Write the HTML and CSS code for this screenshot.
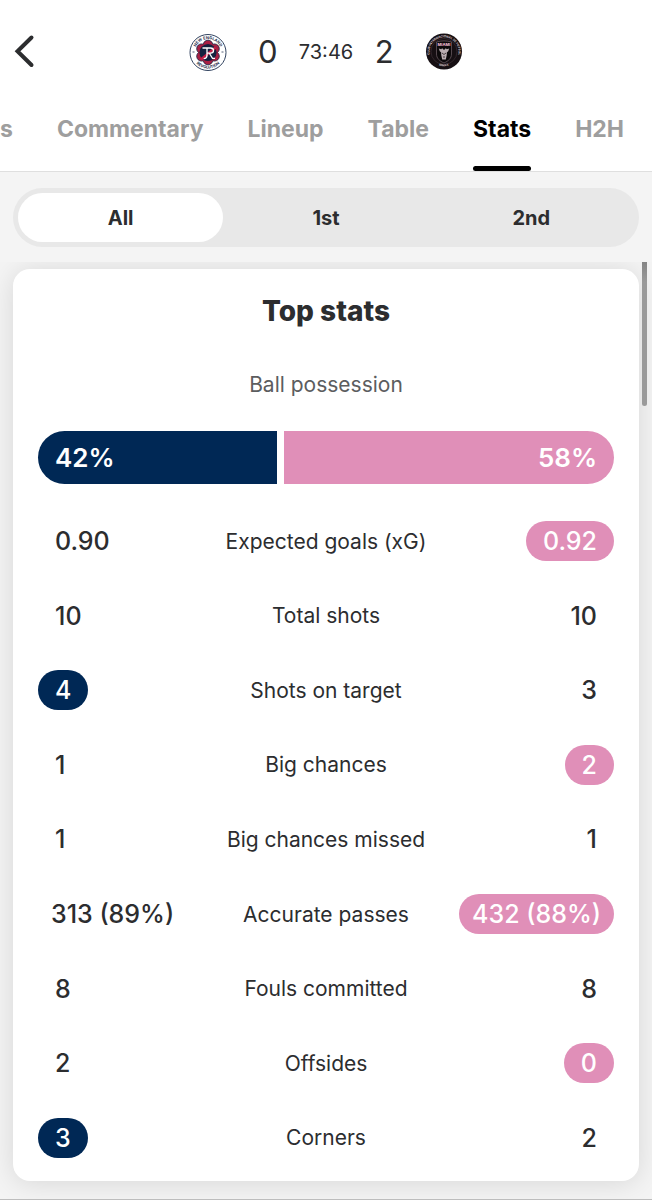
FILE: index.html
```html
<!DOCTYPE html>
<html lang="en">
<head>
<meta charset="utf-8">
<meta name="viewport" content="width=device-width, initial-scale=1">
<title>Match stats</title>
<link rel="stylesheet" href="styles.css">
</head>
<body>
<header class="header">
  <div class="match">
    <button class="back" type="button" aria-label="Back">
      <svg width="24" height="36" viewBox="0 0 24 36" fill="none" stroke="#2c2d2f" stroke-width="4" stroke-linecap="round" stroke-linejoin="miter"><path d="M18.500 3.500 4.500 17.300 18.500 31"/></svg>
    </button>
    <div class="scoreboard">
      <svg class="crest" viewBox="0 0 38 38" role="img" aria-label="New England Revolution">
        <defs>
          <path id="ne-top" d="M5.600 19.500a13.400 13.400 0 0 1 26.800 0"/>
          <path id="ne-bottom" d="M3 19.500a16 16 0 0 0 32 0"/>
        </defs>
        <circle cx="19" cy="19.500" r="18" fill="#fff" stroke="#1b2e4e" stroke-width="0.900"/>
        <g class="crest-text" fill="#1d2b49">
          <text text-anchor="middle"><textPath href="#ne-top" startOffset="50%">NEW ENGLAND</textPath></text>
          <text text-anchor="middle"><textPath href="#ne-bottom" startOffset="50%">REVOLUTION</textPath></text>
        </g>
        <path d="M3.500 19h2M32.500 19h2" stroke="#56617a"/>
        <g fill="#a91f43" stroke="#14213f" stroke-width="0.800">
          <circle cx="19" cy="12" r="4.800"/><circle cx="25.500" cy="15.700" r="4.800"/><circle cx="25.500" cy="23.300" r="4.800"/>
          <circle cx="19" cy="27" r="4.800"/><circle cx="12.500" cy="23.300" r="4.800"/><circle cx="12.500" cy="15.700" r="4.800"/>
        </g>
        <circle cx="19" cy="19.500" r="9.600" fill="#a91f43"/>
        <circle cx="19" cy="19.500" r="8.600" fill="#14213f"/>
        <path d="M12 26.500 26.500 14.500" stroke="#c42048" stroke-width="2.600"/>
        <path d="M13.500 15h8c4 0 4 5.200 0 5.200h-3M18 15v7c0 2.500-1.600 3.700-3.300 3.700M20.500 20.500l3 4.800h2.500" fill="none" stroke="#fff" stroke-width="1.300"/>
      </svg>
      <span class="goals">0</span>
      <span class="clock">73:46</span>
      <span class="goals">2</span>
      <svg class="crest" viewBox="0 0 38 38" role="img" aria-label="Inter Miami">
        <defs>
          <path id="mi-top" d="M7.800 28.300a14.600 14.600 0 1 1 22.400 0"/>
          <path id="mi-bottom" d="M8 29a16.300 16.300 0 0 0 22 0"/>
        </defs>
        <circle cx="19" cy="18.500" r="18" fill="#160f13"/>
        <g class="crest-text" fill="#d9c9cf">
          <text class="crest-ring" text-anchor="middle"><textPath href="#mi-top" startOffset="50%">CLUB INTERNACIONAL DE FUTBOL</textPath></text>
          <text class="crest-ring" text-anchor="middle"><textPath href="#mi-bottom" startOffset="50%">MMXX</textPath></text>
        </g>
        <circle cx="19" cy="18.500" r="13" fill="none" stroke="#4a3c42" stroke-width="0.500"/>
        <path d="M11.500 9c5-1.500 10-1.500 15 0v12c0 4.500-3.200 7-7.500 9-4.300-2-7.500-4.500-7.500-9z" fill="#0c090b" stroke="#67585f" stroke-width="0.800"/>
        <text class="crest-name" x="19" y="13.200" text-anchor="middle" fill="#e9b5c6">MIAMI</text>
        <path d="M13.800 15.500l2.400.8 1-1 1.800 1.800 1.800-1.800 1 1 2.400-.8-1 2.700-1.400 1.200v2.400l-1 4.700h-3.600l-1-4.700v-2.400l-1.400-1.200z" fill="#b9adb1"/>
        <path d="M17 20l2 1.500 2-1.500M18 24h2" fill="none" stroke="#2d2428" stroke-width="0.800"/>
      </svg>
    </div>
  </div>
  <nav class="tabs" aria-label="Match sections">
    <a class="tab" href="#highlights">Highlights</a>
    <a class="tab" href="#commentary">Commentary</a>
    <a class="tab" href="#lineup">Lineup</a>
    <a class="tab" href="#table">Table</a>
    <a class="tab tab-active" href="#stats" aria-current="page">Stats</a>
    <a class="tab" href="#h2h">H2H</a>
  </nav>
</header>

<div class="filter">
  <div class="segments" role="group" aria-label="Period">
    <button class="segment segment-active" type="button" aria-pressed="true">All</button>
    <button class="segment" type="button" aria-pressed="false">1st</button>
    <button class="segment" type="button" aria-pressed="false">2nd</button>
  </div>
</div>

<main class="content">
  <section class="card" id="stats">
    <h1 class="title">Top stats</h1>
    <p class="subtitle">Ball possession</p>
    <div class="possession" style="grid-template-columns:42fr 58fr">
      <span class="share share-home">42%</span>
      <span class="share share-away">58%</span>
    </div>
    <table class="stats">
      <tbody class="rows">
        <tr class="row"><td class="home"><span class="value">0.90</span></td><th class="label" scope="row">Expected goals (xG)</th><td class="away"><span class="value lead-away">0.92</span></td></tr>
        <tr class="row"><td class="home"><span class="value">10</span></td><th class="label" scope="row">Total shots</th><td class="away"><span class="value">10</span></td></tr>
        <tr class="row"><td class="home"><span class="value lead-home">4</span></td><th class="label" scope="row">Shots on target</th><td class="away"><span class="value">3</span></td></tr>
        <tr class="row"><td class="home"><span class="value">1</span></td><th class="label" scope="row">Big chances</th><td class="away"><span class="value lead-away">2</span></td></tr>
        <tr class="row"><td class="home"><span class="value">1</span></td><th class="label" scope="row">Big chances missed</th><td class="away"><span class="value">1</span></td></tr>
        <tr class="row"><td class="home"><span class="value value-long">313 (89%)</span></td><th class="label" scope="row">Accurate passes</th><td class="away"><span class="value value-long lead-away">432 (88%)</span></td></tr>
        <tr class="row"><td class="home"><span class="value">8</span></td><th class="label" scope="row">Fouls committed</th><td class="away"><span class="value">8</span></td></tr>
        <tr class="row"><td class="home"><span class="value">2</span></td><th class="label" scope="row">Offsides</th><td class="away"><span class="value lead-away">0</span></td></tr>
        <tr class="row"><td class="home"><span class="value lead-home">3</span></td><th class="label" scope="row">Corners</th><td class="away"><span class="value">2</span></td></tr>
      </tbody>
    </table>
  </section>
  <div class="scroll-thumb"></div>
</main>
</body>
</html>
```

FILE: styles.css
```css
* { box-sizing: border-box; }

body {
  margin: 0;
  min-height: 100vh;
  display: flex;
  flex-direction: column;
  background: #f4f4f4;
  color: #2c2d2f;
  font-family: Inter, "Liberation Sans", sans-serif;
}

button {
  border: 0;
  padding: 0;
  background: none;
  color: inherit;
  font: inherit;
  cursor: pointer;
}

.header {
  background: #fff;
  border-bottom: 1px solid #dfdfdf;
}

.match {
  display: grid;
  grid-template-columns: 1fr auto 1fr;
  align-items: center;
  height: 88px;
  padding: 16px 13px 0;
}

.back {
  justify-self: start;
  display: flex;
}

.scoreboard {
  display: flex;
  align-items: center;
}

.crest {
  width: 38px;
  height: 38px;
}

.crest-text { font-size: 4px; font-weight: 700; }
.crest-ring { font-size: 3px; }
.crest-name { font-size: 4px; font-weight: 800; }

.goals {
  width: 82px;
  font-size: 31px;
  line-height: 40px;
  text-align: center;
}

.clock {
  margin: 0 -10px;
  font-size: 20px;
  line-height: 40px;
}

.tabs {
  display: flex;
  justify-content: flex-end;
  gap: 44px;
  padding-right: 28px;
  overflow: hidden;
}

.tab {
  display: flex;
  flex-direction: column;
  justify-content: space-between;
  height: 83px;
  padding-top: 25px;
  color: #9e9e9e;
  font-size: 23px;
  font-weight: 700;
  line-height: 32px;
  text-decoration: none;
}

.tab-active { color: #000; }

.tab-active::after {
  content: "";
  height: 5px;
  border-radius: 3px;
  background: #000;
}

.filter {
  padding: 16px 13px 15px;
  background: #f4f4f4;
}

.segments {
  display: grid;
  grid-template-columns: repeat(3, 1fr);
  padding: 5px;
  border-radius: 30px;
  background: #e8e8e8;
}

.segment {
  height: 49px;
  border-radius: 25px;
  font-size: 20px;
  font-weight: 700;
}

.segment-active { background: #fff; }

.content {
  position: relative;
  flex: 1;
  display: flex;
  flex-direction: column;
  padding: 7px 13px 18px;
  border-bottom: 1px solid #bdbdbd;
  overflow: hidden;
}

.card {
  flex: 1;
  display: flex;
  flex-direction: column;
  padding: 24px 25px 6px;
  border-radius: 17px;
  background: #fff;
  box-shadow: 0 2px 28px rgba(0, 0, 0, 0.12);
}

.title {
  margin: 0;
  font-size: 28px;
  font-weight: 800;
  line-height: 36px;
  text-align: center;
}

.subtitle {
  margin: 40px 0 30px;
  color: #5c5d5f;
  font-size: 21px;
  line-height: 32px;
  text-align: center;
}

.possession {
  display: grid;
  gap: 7px;
  margin-bottom: 20px;
}

.share {
  padding: 0 17px;
  color: #fff;
  font-size: 26px;
  font-weight: 600;
  line-height: 53px;
}

.share-home {
  border-radius: 27px 0 0 27px;
  background: #002855;
}

.share-away {
  border-radius: 0 27px 27px 0;
  background: #e08fb8;
  text-align: right;
}

.stats {
  flex: 1;
  display: flex;
}

.rows {
  flex: 1;
  display: grid;
  grid-auto-rows: minmax(48px, 1fr);
}

.row {
  display: grid;
  grid-template-columns: 1fr auto 1fr;
  align-items: center;
}

.home,
.away,
.label {
  padding: 0;
}

.home { text-align: left; }
.away { text-align: right; }

.label {
  font-size: 21px;
  font-weight: 400;
}

.value {
  display: inline-block;
  min-width: 49px;
  padding: 0 17px;
  border-radius: 20px;
  font-size: 25px;
  font-weight: 500;
  line-height: 40px;
}

.value-long { padding: 0 13px; }
.lead-home { background: #002855; color: #fff; }
.lead-away { background: #e08fb8; color: #fff; }

.scroll-thumb {
  position: absolute;
  top: 0;
  right: 5px;
  width: 5px;
  height: 144px;
  border-radius: 0 0 3px 3px;
  background: linear-gradient(#858585, #9a9a9a 20px);
}
```
